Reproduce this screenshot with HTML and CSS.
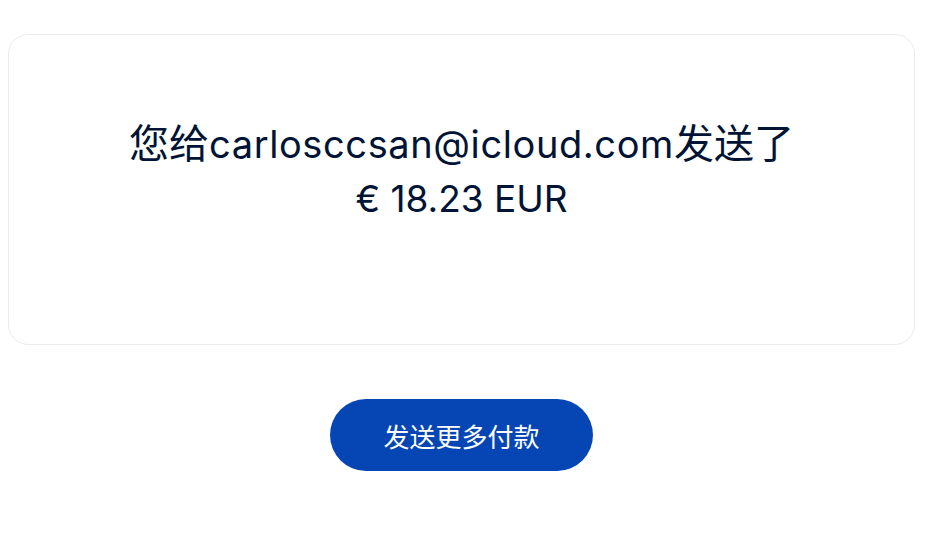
FILE: index.html
```html
<!DOCTYPE html>
<html lang="zh-CN">

<head>
    <meta charset="UTF-8">
    <meta name="viewport" content="width=device-width, initial-scale=1.0">
    <title>付款已发送</title>
    <link rel="stylesheet" href="styles.css">
</head>

<body>
    <div class="page">
        <div class="result-card">
            <h1 class="result-title">
                <span class="cjk">您给</span><span class="email">carlosccsan@icloud.com</span><span class="cjk">发送了</span><br>
                € 18.23 EUR
            </h1>
        </div>

        <div class="actions">
            <button class="btn-primary" type="button">发送更多付款</button>
        </div>
    </div>
</body>

</html>
```

FILE: styles.css
```css
body {
    margin: 0;
    background-color: #fff;
    font-family: 'Inter', 'Noto Sans CJK SC', sans-serif;
    color: #001435;
}

.page {
    padding: 34px 16px 0 8px;
}

.result-card {
    height: 311px;
    box-sizing: border-box;
    border: 1px solid #ececec;
    border-radius: 20px;
    padding-top: 82px;
    text-align: center;
}

.result-title {
    margin: 0;
    font-size: 37px;
    font-weight: 400;
    line-height: 54px;
}

.cjk {
    font-size: 40px;
}

.email {
    font-size: 38px;
    letter-spacing: 0.6px;
}

.actions {
    display: flex;
    justify-content: center;
    margin-top: 54px;
}

.btn-primary {
    width: 263px;
    height: 72px;
    border: none;
    border-radius: 36px;
    background-color: #0546b4;
    color: #fff;
    font-family: 'Inter', 'Noto Sans CJK SC', sans-serif;
    font-size: 26px;
    cursor: pointer;
}
```
